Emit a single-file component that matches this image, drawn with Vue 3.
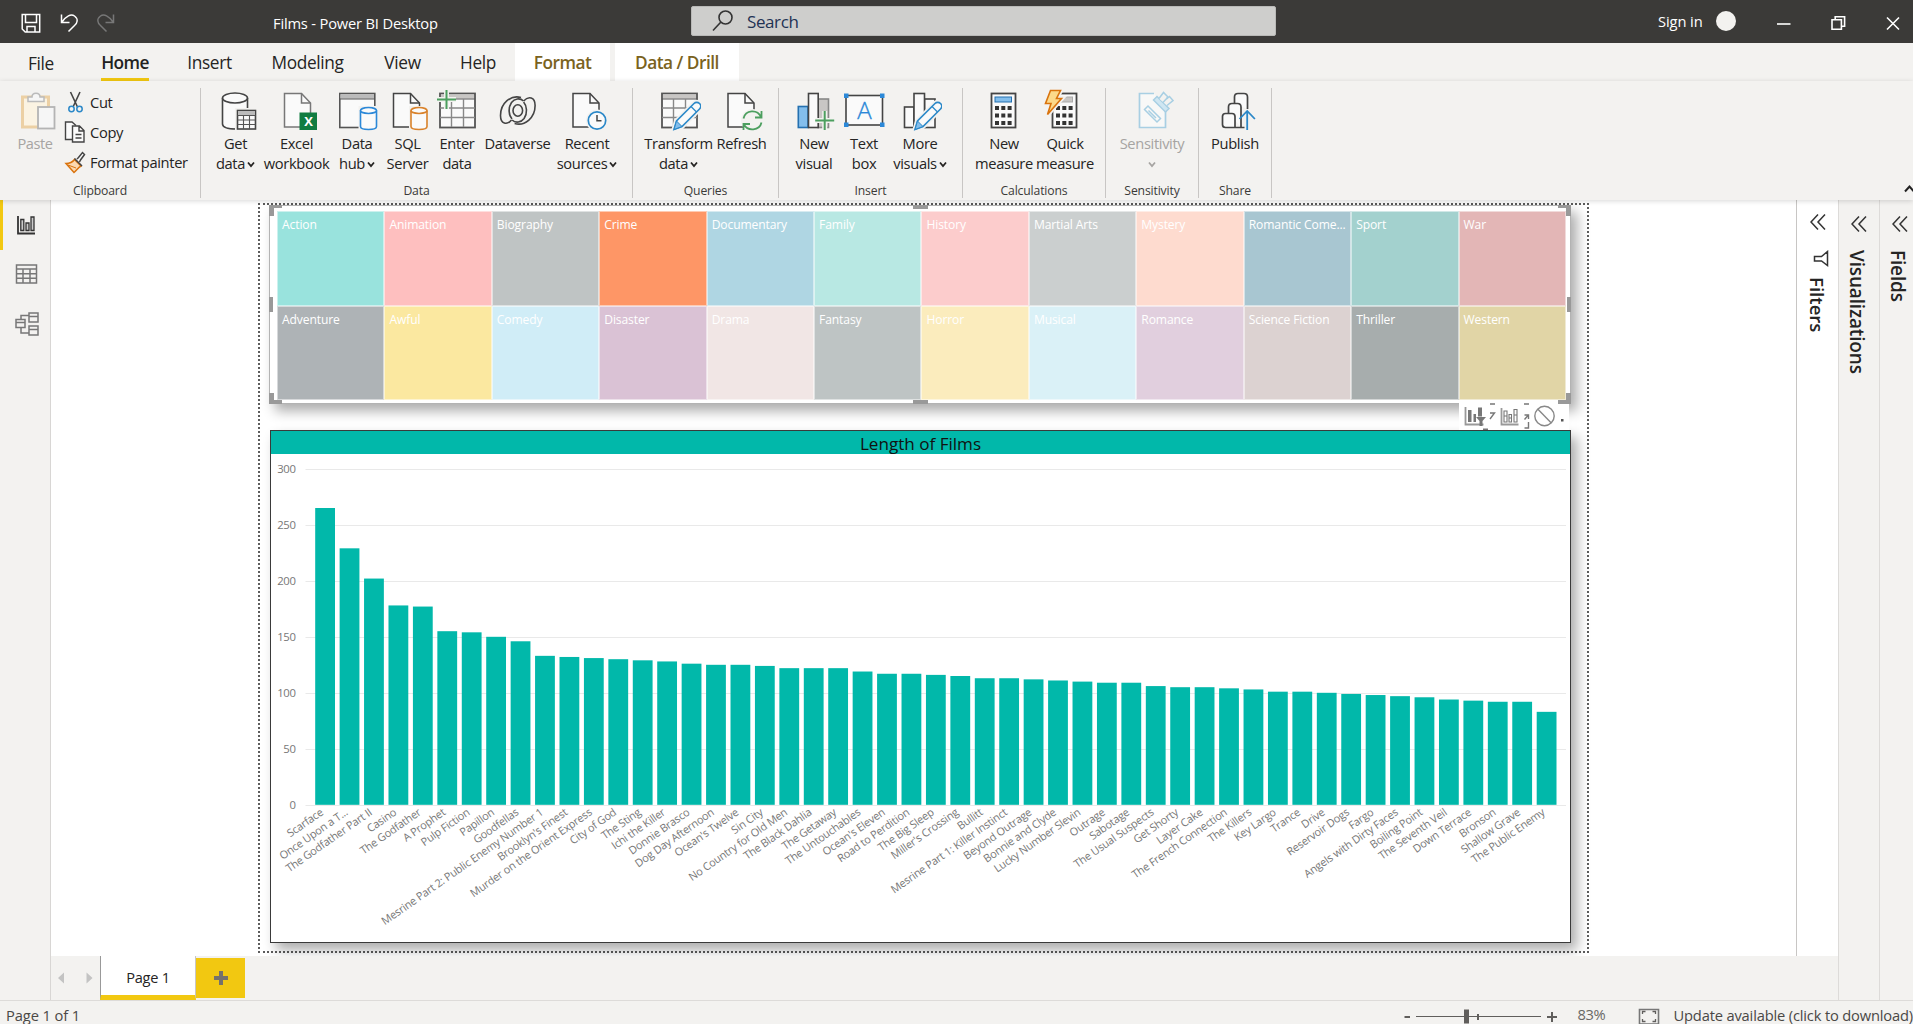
<script setup>
const tabs = [
  { name: 'File', width: 82, cls: 'file' },
  { name: 'Home', width: 86, cls: 'active' },
  { name: 'Insert', width: 83, cls: '' },
  { name: 'Modeling', width: 113, cls: '' },
  { name: 'View', width: 77, cls: '' },
  { name: 'Help', width: 74, cls: '' },
  { name: 'Format', width: 95, cls: 'ctx' },
  { name: 'Data / Drill', width: 124, cls: 'ctx second' },
]

const doc = (x, c = '#444') =>
  `<path d="M${x} 4.5h17l9 9.500v24h-26z" fill="#fafafa" stroke="${c}" stroke-width="1.500"/><path d="M${x + 17} 4.500v9.500h9" fill="none" stroke="${c}" stroke-width="1.500"/>`
const drum = (x, y, h, c) =>
  `<path d="M${x} ${y}v${h}c0 4 16 4 16 0v-${h}" fill="#fafafa" stroke="${c}" stroke-width="1.600"/><ellipse cx="${x + 8}" cy="${y}" rx="8" ry="3" fill="#fafafa" stroke="${c}" stroke-width="1.600"/>`
const grid = `<rect x="5" y="4.500" width="35" height="34" fill="#fafafa" stroke="#555" stroke-width="1.800"/><rect x="6" y="5.500" width="33" height="4" fill="#c8c6c4"/><path d="M5 10h35" stroke="#555"/><path d="M5 19h35M5 28.500h35M16.500 10v28M28.500 10v28" stroke="#888" stroke-width="1.400"/>`
const pencil = `<path d="M17 40.500l2.500-8.500 17.500-17.500a3.800 3.800 0 0 1 5.500 5.500l-17.500 17.500z" fill="#fafafa" stroke="#f3f2f0" stroke-width="5"/><path d="M17 40.500l2.500-8.500 17.500-17.500a3.800 3.800 0 0 1 5.500 5.500l-17.500 17.500z" fill="#fafafa" stroke="#2b88c8" stroke-width="1.600"/><path d="M17 40.500l2.500-8.500 5.500 5.500z" fill="#83beec" stroke="#2b88c8"/><path d="M34 17.500l5.500 5.500" stroke="#2b88c8" stroke-width="1.300"/>`
const plus = (x, y) =>
  `<path d="M${x} ${y - 9.5}v19M${x - 9.5} ${y}h19" stroke="#f3f2f0" stroke-width="5"/><path d="M${x} ${y - 9.5}v19M${x - 9.5} ${y}h19" stroke="#4c9f5f" stroke-width="2"/>`
const keys = [17, 24.5, 32].map(y => [13, 19.3, 25.6].map(x => `<rect x="${x}" y="${y}" width="4" height="4" fill="#333"/>`).join('')).join('')
const calc = (fill, stroke) =>
  `<rect x="9.500" y="4.500" width="24" height="34" fill="#fafafa" stroke="#444" stroke-width="1.800"/><rect x="13" y="8" width="16.500" height="5" fill="${fill}" stroke="${stroke}"/>${keys}`

const icons = {
  get: `<path d="M8.500 9v26c0 3 5 5 14 5h11v-31" fill="#fafafa"/><path d="M8.500 9v26c0 3 5 5 14 5M33.500 9v12" fill="none" stroke="#444" stroke-width="1.600"/><ellipse cx="21" cy="9" rx="12.500" ry="5" fill="#fafafa" stroke="#444" stroke-width="1.600"/><rect x="21" y="19" width="22" height="22" fill="#f3f2f0"/><rect x="23.500" y="21.500" width="18" height="18.500" fill="#fafafa" stroke="#444" stroke-width="1.600"/><rect x="24" y="22" width="17" height="4" fill="#bbb"/><path d="M23.500 26.500h18M23.500 31h18M23.500 35.500h18M29.500 26v14M35.500 26v14" stroke="#555" stroke-width="1.100"/>`,
  excel: doc(9.5, '#777') + `<rect x="24.500" y="23.500" width="17.500" height="17.500" fill="#107c41"/><text x="33.300" y="37" text-anchor="middle" font-size="13" font-weight="700" fill="#fff" font-family="Open Sans, sans-serif">X</text>`,
  hub: `<rect x="4.800" y="4.500" width="35" height="34" fill="#fafafa" stroke="#555" stroke-width="1.600"/><rect x="5.500" y="5.200" width="33.500" height="4.500" fill="#bbb"/><path d="M5 10h35" stroke="#555"/><rect x="23.500" y="17" width="20" height="24" fill="#f3f2f0"/>` + drum(25.5, 21.5, 16, '#2b88d8'),
  sql: doc(7.5) + `<rect x="23" y="17" width="20" height="24" fill="#f3f2f0"/>` + drum(25, 21.5, 16, '#d9822b'),
  enter: grid + plus(11.5, 10.5),
  dataverse: `<g fill="none" stroke="#444" stroke-width="1.600"><ellipse cx="21.800" cy="21.500" rx="4.800" ry="5.800"/><path d="M27.500 12C24 8.500 18.500 9.500 15.500 13.500c-3.500 5-3 12.500.500 16.500"/><path d="M16.100 31c3.500 3.500 9 2.500 12-1.500 3.500-5 3-12.500-.5-16.500"/><path d="M25 8.500C15 5.500 4.500 14 4.500 26.500c0 8.500 6.500 10 11 4.500"/><path d="M18.600 34.500C28.600 37.500 39.100 29 39.100 16.500c0-8.500-6.500-10-11.500-4.500"/></g>`,
  recent: doc(8) + `<circle cx="32" cy="31.500" r="11" fill="#f3f2f0"/><circle cx="32" cy="31.500" r="8.700" fill="#fafafa" stroke="#2b88c8" stroke-width="1.700"/><path d="M32 26v5.800h4.500" fill="none" stroke="#444" stroke-width="1.500"/>`,
  transform: grid + pencil,
  refresh: doc(8) + `<circle cx="32.500" cy="31.500" r="11.500" fill="#f3f2f0"/><g fill="none" stroke="#4c9f5f" stroke-width="1.800"><path d="M23.500 29.500c2-9 14-9.500 17.500-1.500M41.500 22v6.500h-6.500M41.500 33.500c-2 8.500-14 9-17.500 2M23.500 41v-6h6.500"/></g>`,
  visual: `<g stroke-width="1.600"><rect x="6.300" y="17.500" width="9.700" height="21" fill="#83beec" stroke="#2470b0"/><rect x="26" y="10" width="10.500" height="28.500" fill="#c8c6c4" stroke="#888"/><rect x="16.500" y="4.500" width="9.700" height="34" fill="#fafafa" stroke="#444"/></g>` + plus(32.7, 31.5),
  textbox: `<rect x="4" y="6.500" width="36.500" height="29.500" fill="#fafafa" stroke="#444" stroke-width="1.600"/><g fill="#2b88d8"><rect x="2" y="4.500" width="4.500" height="4.500"/><rect x="38" y="4.500" width="4.500" height="4.500"/><rect x="2" y="33.500" width="4.500" height="4.500"/><rect x="38" y="33.500" width="4.500" height="4.500"/></g><text x="22.200" y="30" text-anchor="middle" font-size="24" fill="#2b88d8" font-family="Open Sans, sans-serif" font-weight="300" stroke="#2b88d8" stroke-width=".3">A</text>`,
  more: `<g stroke="#444" stroke-width="1.600" fill="#fafafa"><rect x="6.500" y="18" width="9.500" height="20.500"/><rect x="26.500" y="10" width="10.500" height="28.500"/><rect x="16" y="4.500" width="10.500" height="34"/></g>` + pencil,
  calc: calc('#83beec', '#2470b0'),
  quick: calc('#c8c6c4', '#aaa') + `<path d="M7.500 1.500h10l-4 8h5l-14 16 3.500-11h-5.500z" fill="#fcd98a" stroke="#f3f2f0" stroke-width="5"/><path d="M7.500 1.500h10l-4 8h5l-14 16 3.500-11h-5.500z" fill="#fcd98a" stroke="#d9730d" stroke-width="1.600"/>`,
  sensitivity: `<path d="M24 4.500h-14.500v34h26v-18" fill="#f8f8f7" stroke="#a8cfe3" stroke-width="1.700"/><g fill="none" stroke="#a8cfe3" stroke-width="1.500"><path d="M14.500 20.500l3.500-3.500 12.500 12.500-3.500 3.500z"/><path d="M18.500 21.500l7.500 7.500"/><path d="M23.500 11l3.500-3.500 12 12-3.500 3.500z" fill="#cfe6f2"/><path d="M29 9.500l4.500-6 4.500 4.500-1.500 2 3-2.500 3.500 4-6 5" fill="#f3f2f0"/><path d="M33 13.500l5-5.500"/></g>`,
  publish: `<g fill="#fafafa" stroke="#444" stroke-width="1.700"><path d="M21.500 14.500V8c0-2 1.500-3.500 3.500-3.500h6c2 0 3.500 1.500 3.500 3.500v12"/><path d="M15.500 24.500V18c0-2 1.500-3.500 3.500-3.500h5.500c2 0 3.500 1.500 3.500 3.500v20"/><path d="M34 38.500H12.500c-2 0-3-1-3-3v-8c0-2 1-3 3-3h6.500c2 0 3 1 3 3v11"/></g><path d="M34.500 20v21" stroke="#f3f2f0" stroke-width="6"/><path d="M34.200 41V22.500M26.500 30l7.700-8 7.700 8" fill="none" stroke="#2b88c8" stroke-width="1.800"/>`,
}

const groups = [
  { name: 'Data', width: 432, pad: 5, items: [
    { icon: 'get', a: 'Get', b: 'data', drop: true, w: 59 },
    { icon: 'excel', a: 'Excel', b: 'workbook', w: 63 },
    { icon: 'hub', a: 'Data', b: 'hub', drop: true, w: 58 },
    { icon: 'sql', a: 'SQL', b: 'Server', w: 43 },
    { icon: 'enter', a: 'Enter', b: 'data', w: 56 },
    { icon: 'dataverse', a: 'Dataverse', b: '', w: 65 },
    { icon: 'recent', a: 'Recent', b: 'sources', drop: true, w: 74 },
  ] },
  { name: 'Queries', width: 146, pad: 10, items: [
    { icon: 'transform', a: 'Transform', b: 'data', drop: true, w: 71 },
    { icon: 'refresh', a: 'Refresh', b: '', w: 55 },
  ] },
  { name: 'Insert', width: 184, pad: 10, items: [
    { icon: 'visual', a: 'New', b: 'visual', w: 50 },
    { icon: 'textbox', a: 'Text', b: 'box', w: 50 },
    { icon: 'more', a: 'More', b: 'visuals', drop: true, w: 62 },
  ] },
  { name: 'Calculations', width: 143, pad: 10, items: [
    { icon: 'calc', a: 'New', b: 'measure', w: 62 },
    { icon: 'quick', a: 'Quick', b: 'measure', w: 60 },
  ] },
  { name: 'Sensitivity', width: 93, pad: 11, items: [
    { icon: 'sensitivity', a: 'Sensitivity', b: '', drop: true, w: 70, off: true },
  ] },
  { name: 'Share', width: 73, pad: 6, items: [
    { icon: 'publish', a: 'Publish', b: '', w: 60 },
  ] },
]

const genres = [
  ['Action', '#99e3dd'], ['Adventure', '#aeb3b6'],
  ['Animation', '#febfbf'], ['Awful', '#fbe8a0'],
  ['Biography', '#bfc4c4'], ['Comedy', '#d0edf7'],
  ['Crime', '#fe9666'], ['Disaster', '#dac2d5'],
  ['Documentary', '#afd6e3'], ['Drama', '#f1e6e5'],
  ['Family', '#b8e8e3'], ['Fantasy', '#bec4c4'],
  ['History', '#fccccc'], ['Horror', '#fbecbd'],
  ['Martial Arts', '#cbcfcf'], ['Musical', '#daf1f7'],
  ['Mystery', '#fedbcf'], ['Romance', '#e1cfde'],
  ['Romantic Come...', '#a8c6d1'], ['Science Fiction', '#dcd2d1'],
  ['Sport', '#a3d1ce'], ['Thriller', '#a7adad'],
  ['War', '#e3b6b6'], ['Western', '#e1d5a6'],
]

const films = [
  ['Scarface', 265], ['Once Upon a T...', 229], ['The Godfather Part II', 202], ['Casino', 178],
  ['The Godfather', 177], ['A Prophet', 155], ['Pulp Fiction', 154], ['Papillon', 150],
  ['Goodfellas', 146], ['Mesrine Part 2: Public Enemy Number 1', 133], ["Brooklyn's Finest", 132],
  ['Murder on the Orient Express', 131], ['City of God', 130], ['The Sting', 129],
  ['Ichi the Killer', 128], ['Donnie Brasco', 126], ['Dog Day Afternoon', 125],
  ["Ocean's Twelve", 125], ['Sin City', 124], ['No Country for Old Men', 122],
  ['The Black Dahlia', 122], ['The Getaway', 122], ['The Untouchables', 119],
  ["Ocean's Eleven", 117], ['Road to Perdition', 117], ['The Big Sleep', 116],
  ["Miller's Crossing", 115], ['Bullitt', 113], ['Mesrine Part 1: Killer Instinct', 113],
  ['Beyond Outrage', 112], ['Bonnie and Clyde', 111], ['Lucky Number Slevin', 110],
  ['Outrage', 109], ['Sabotage', 109], ['The Usual Suspects', 106], ['Get Shorty', 105],
  ['Layer Cake', 105], ['The French Connection', 104], ['The Killers', 103], ['Key Largo', 101],
  ['Trance', 101], ['Drive', 100], ['Reservoir Dogs', 99], ['Fargo', 98],
  ['Angels with Dirty Faces', 97], ['Boiling Point', 96], ['The Seventh Veil', 94],
  ['Down Terrace', 93], ['Bronson', 92], ['Shallow Grave', 92], ['The Public Enemy', 83],
]
const base = 350.8
const bars = films.map(([name, v], i) => ({
  name,
  x: 44.2 + i * 24.43,
  y: base - v * 1.12,
  h: v * 1.12,
}))
const ticks = [300, 250, 200, 150, 100, 50, 0].map(v => ({ v, y: Math.round(base - v * 1.12) + 0.5 }))
</script>

<template>
  <div class="app">
    <header class="titlebar">
      <svg class="quick" width="110" height="43" fill="none" stroke="#fff" stroke-width="1.500">
        <path d="M6.200 14.500h17.500v17.500h-14.500l-3-3z M9.500 15v7.500h11v-7.500 M11 32v-5.500h8v5.500" />
        <path d="M45.500 14.500v8h8M46 22c4-6 9-8.500 12.500-6 4 3 3 7 0 9.500l-6 6" />
        <path d="M97.500 14.500v8h-8M97 22c-4-6-9-8.500-12.500-6-4 3-3 7 0 9.500l6 6" stroke="#777" />
      </svg>
      <div class="doc-name">Films - Power BI Desktop</div>
      <div class="search">
        <svg width="22" height="22" fill="none" stroke="#333" stroke-width="1.600"><circle cx="13.500" cy="7.500" r="6.500" /><path d="M8.700 12.300L1 20.500" /></svg>
        <span>Search</span>
      </div>
      <div class="account">Sign in<i></i></div>
      <svg class="win" width="130" height="43" fill="none" stroke="#fff" stroke-width="1.600">
        <path d="M1 24h13.500" />
        <path d="M56 19.800h9.400v9.400h-9.400zM59.200 19.500v-2.700h9.400v9.400h-3" />
        <path d="M111 17.500l12 12M123 17.500l-12 12" />
      </svg>
    </header>

    <nav class="tabs">
      <div v-for="t in tabs" :key="t.name" class="tab" :class="t.cls" :style="{ width: t.width + 'px' }"><span>{{ t.name }}</span></div>
    </nav>

    <section class="ribbon">
      <div class="group clipboard">
        <div class="group-body">
          <div class="paste">
            <svg width="44" height="42">
              <rect x="9.500" y="8" width="26" height="30" fill="#fbf3e2" stroke="#ecd0a4" stroke-width="3" />
              <path d="M15 12.500V8h4c0-5 8-5 8 0h4v4.500z" fill="#f6f6f6" stroke="#bbb" stroke-width="1.500" />
              <rect x="25" y="18" width="16.500" height="21.500" fill="#f6f6f6" stroke="#b4b4b4" stroke-width="1.800" />
            </svg>
            <span>Paste</span>
          </div>
          <div class="clip-list">
            <div>
              <svg width="22" height="24" fill="none"><path d="M6.500 2l7 15M16 2L9 17" stroke="#444" stroke-width="1.600" /><circle cx="7.500" cy="19" r="2.700" stroke="#2b88c8" stroke-width="1.500" /><circle cx="15.500" cy="19" r="2.700" stroke="#2b88c8" stroke-width="1.500" /></svg>Cut
            </div>
            <div>
              <svg width="22" height="24" fill="#fafafa" stroke="#444" stroke-width="1.400"><path d="M8 19.500H1.500V2H8l4 3.500" /><path d="M8.500 6h7l4.500 4.500v11.500H8.500zM15 6v5h5M11.500 14.500h6M11.500 18h6" /></svg>Copy
            </div>
            <div>
              <svg width="22" height="24"><path d="M2 13.500c4 0 7-2 8.500-4l6.500 6.500c-3 1.500-4 4-7 6.500z" fill="#fcd9b0" stroke="#d9730d" stroke-width="1.500" /><path d="M4 15l8 3" stroke="#d9730d" /><path d="M10.500 8.500l7.500 7.500M13 9l1.500-1.500 4-5 2 2-4 5.500L15.500 12" stroke="#444" fill="#fafafa" stroke-width="1.500" /></svg>Format painter
            </div>
          </div>
        </div>
        <div class="group-name">Clipboard</div>
      </div>
      <div v-for="g in groups" :key="g.name" class="group" :style="{ width: g.width + 'px' }">
        <div class="group-body" :style="{ paddingLeft: g.pad + 'px' }">
          <div v-for="(it, i) in g.items" :key="i" class="cmd" :class="{ off: it.off }" :style="{ width: it.w + 'px' }">
            <svg width="44" height="42" v-html="icons[it.icon]"></svg>
            <span>{{ it.a }}</span>
            <span>{{ it.b }}<svg v-if="it.drop" class="caret" :class="{ alone: !it.b }" width="8" height="7"><path d="M1 1.500l3 3.500 3-3.500" fill="none" stroke="currentColor" stroke-width="1.800" /></svg></span>
          </div>
        </div>
        <div class="group-name">{{ g.name }}</div>
      </div>
      <svg class="collapse" width="10" height="9"><path d="M1 7.500l4.500-5 4.500 5" fill="none" stroke="#222" stroke-width="2" /></svg>
    </section>

    <div class="work">
      <aside class="rail">
        <div class="rail-item on"><svg width="24" height="26" fill="#ccc" stroke="#333" stroke-width="1.300"><path d="M4 4v17.500h17" fill="none" stroke-width="1.800" /><path d="M6.800 7.500h3v11h-3zM12 11h3v7.500h-3zM17 5h3v13.500h-3z" /></svg></div>
        <div class="rail-item"><svg width="24" height="26" fill="none" stroke="#777" stroke-width="1.500"><path d="M2.500 4h20v18h-20zM2.500 8h20M2.500 12.700h20M2.500 17.300h20M9 8v14M16 8v14" /></svg></div>
        <div class="rail-item"><svg width="26" height="28" fill="#f3f2f0" stroke="#777" stroke-width="1.500"><path d="M7 10V5.500h8M7 17v6h8" fill="none" /><path d="M2 9.500h9v8H2zM2 12.500h9M15 3h9v9h-9zM15 6.500h9M15 16h9v9h-9zM15 19.500h9" /></svg></div>
      </aside>

      <div class="center">
        <div class="canvas-row">
          <main class="canvas">
            <div class="page">
              <div class="treemap">
                <div class="tiles">
                  <div v-for="g in genres" :key="g[0]" class="tile" :style="{ background: g[1] }">{{ g[0] }}</div>
                </div>
                <i class="h tl"></i><i class="h tr"></i><i class="h bl"></i><i class="h br"></i>
                <i class="m t"></i><i class="m b"></i><i class="m l"></i><i class="m r"></i>
                <svg class="interact" width="110" height="27" fill="none" stroke="#777" stroke-width="1.400">
                  <path d="M6.500 4v17.500h18" stroke="#999" stroke-width="1.800" /><path d="M9 7h3.500v12H9zM14.500 11h2.500v8h-2.500zM19 4.500h4v9h-4z" fill="#777" stroke="none" />
                  <path d="M17 14h10l-3.500 4v5h-3v-5z" fill="#777" stroke="none" /><path d="M31 1h5M31 10h4.500l-4.500 6M24 26.300h5" />
                  <path d="M42.500 5v16.500h17" stroke="#999" stroke-width="1.800" /><path d="M45 8h3v11h-3zM45 13h3M50 11.500h2.500v7.500H50zM50 15h2.500M55 6.500h3v12.500h-3zM55 12h3" stroke-width="1.100" />
                  <path d="M65 1h5M65.500 12h4v4M69 12.500l-3.500 4M69.500 19v6h-4" />
                  <circle cx="85.500" cy="13" r="9.700" stroke="#888" /><path d="M78.700 6l13.600 14" stroke="#888" /><rect x="102" y="16" width="2.500" height="2.500" fill="#555" stroke="none" />
                </svg>
              </div>

              <div class="chart">
                <div class="chart-title">Length of Films</div>
                <svg width="1299" height="487">
                  <g v-for="t in ticks" :key="t.v">
                    <path :d="`M34.500 ${t.y}H1295`" stroke="#e9e9e9" />
                    <text class="axis" x="24.500" :y="t.y + 3.5" text-anchor="end">{{ t.v }}</text>
                  </g>
                  <g v-for="b in bars" :key="b.name">
                    <rect :x="b.x" :y="b.y" width="19.800" :height="b.h" fill="#01b8aa" />
                    <text class="film" text-anchor="end" :transform="`translate(${b.x + 8.8} 360) rotate(-35)`">{{ b.name }}</text>
                  </g>
                </svg>
              </div>
            </div>
          </main>
          <aside class="filters">
            <svg width="16" height="16" class="chev"><path d="M8 .5L1 8l7 7.500M15 .5L8 8l7 7.500" fill="none" stroke="#333" stroke-width="1.500" /></svg>
            <svg width="16" height="18" class="funnel"><path d="M14.500 1.500v14L8.500 11H1.500V6.500h7z" fill="none" stroke="#333" stroke-width="1.500" /></svg>
            <span>Filters</span>
          </aside>
        </div>
        <footer class="pages">
          <svg width="49" height="44" fill="#c3c3c3"><path d="M13 16.500v11l-6-5.500zM35.500 16.500v11l6-5.500z" /></svg>
          <div class="page-tab">Page 1</div>
          <div class="add"><svg width="16" height="16"><path d="M8 1v14M1 8h14" stroke="#75716c" stroke-width="4" /></svg></div>
        </footer>
      </div>

      <aside class="pane">
        <svg width="16" height="16" class="chev"><path d="M8 .5L1 8l7 7.500M15 .5L8 8l7 7.500" fill="none" stroke="#333" stroke-width="1.500" /></svg>
        <span>Visualizations</span>
      </aside>
      <aside class="pane last">
        <svg width="16" height="16" class="chev"><path d="M8 .5L1 8l7 7.500M15 .5L8 8l7 7.500" fill="none" stroke="#333" stroke-width="1.500" /></svg>
        <span>Fields</span>
      </aside>
    </div>

    <div class="status">
      <span class="count">Page 1 of 1</span>
      <svg width="160" height="24" fill="none" stroke="#605e5c">
        <path d="M4.500 17h5.500" stroke-width="2" /><path d="M16 16.500h125" stroke-width="1.200" /><path d="M66.500 9.500v14" stroke-width="5" /><path d="M78 14v6" stroke-width="2" /><path d="M147 17h10M152 12v10" stroke-width="2" />
      </svg>
      <span class="pct">83%</span>
      <svg class="fit" width="22" height="24" fill="none" stroke="#605e5c"><path d="M1.500 9.500h19v14.500h-19z" stroke-width="1.600" stroke="#777" /><path d="M4.500 14v-2.500h3M14.500 11.500h3v2.500M4.500 19v2.500h3M14.500 21.500h3V19" stroke-width="1.300" /></svg>
      <span class="update">Update available (click to download)</span>
    </div>
  </div>
</template>

<style>
body { margin: 0; overflow: hidden; }
</style>

<style scoped>
.app { width: 1913px; height: 1024px; display: flex; flex-direction: column; background: #f3f2f0; font-family: "Open Sans", "Noto Sans", sans-serif; color: #252423; overflow: hidden; }
.app * { box-sizing: border-box; }
svg { display: block; flex: none; }
.titlebar { height: 43px; flex: none; background: #3b3a38; color: #fff; display: flex; align-items: center; font-size: 14.7px; }
.quick { margin-left: 16px; }
.doc-name { margin-left: 147px; width: 418px; letter-spacing: -.18px; padding-top: 2px; white-space: nowrap; }
.search { width: 585px; height: 30px; background: #cececc; border: 1px solid #b9b9b7; border-radius: 2px; display: flex; align-items: center; color: #1f3354; font-size: 17px; letter-spacing: -.4px; margin-bottom: 1px; }
.search svg { margin-left: 20px; }
.search span { margin-left: 13px; }
.account { margin-left: 382px; display: flex; align-items: center; font-size: 14.7px; letter-spacing: -.1px; width: 118px; white-space: nowrap; padding-bottom: 1px; }
.account i { width: 20px; height: 20px; border-radius: 50%; background: #f3f2f0; margin-left: 13px; }

.tabs { height: 38px; flex: none; display: flex; font-size: 17.3px; letter-spacing: -.35px; }
.tab { display: flex; align-items: center; justify-content: center; padding-top: 1px; }
.tab.file { padding-top: 2px; }
.tab.active { padding-top: 2px; }
.tab.active span { font-weight: 600; letter-spacing: -.6px; height: 36px; line-height: 36px; border-bottom: 3px solid #f2c811; color: #222; }
.tab.ctx { background: #fff; color: #7a6220; font-weight: 600; letter-spacing: -.5px; }
.tab.second { margin-left: 5px; }

.ribbon { height: 119px; flex: none; display: flex; padding-top: 7px; position: relative; z-index: 3; background: #f3f2f0; box-shadow: 0 1px 5px rgba(0,0,0,.16); }
.group { height: 110px; border-right: 1px solid #c8c6c4; flex: none; display: flex; flex-direction: column; }
.group-body { height: 92px; flex: none; display: flex; }
.group-name { text-align: center; font-size: 12.2px; letter-spacing: -.15px; line-height: 18px; margin-top: 2px; color: #3b3a38; height: 18px; flex: none; }
.clipboard { width: 201px; }
.paste { width: 44px; margin-left: 13px; font-size: 14.6px; letter-spacing: -.4px; color: #a6a4a2; text-align: center; display: flex; flex-direction: column; align-items: center; }
.paste span, .cmd span { line-height: 20px; white-space: nowrap; }
.paste svg { margin-top: 1px; }
.paste span { margin-top: 2px; }
.clip-list { margin: -1px 0 0 7px; font-size: 14.7px; letter-spacing: -.35px; }
.clip-list div { height: 30px; display: flex; align-items: center; gap: 4px; white-space: nowrap; }
.cmd { display: flex; flex-direction: column; align-items: center; font-size: 14.7px; letter-spacing: -.35px; padding-top: 1px; flex: none; }
.cmd span { display: flex; align-items: center; height: 20px; margin-top: 2px; }
.cmd span + span { margin-top: 0; }
.cmd.off { color: #a6a4a2; }
.caret { margin: 2px 0 0 2px; }
.caret.alone { margin-left: 0; }
.collapse { position: absolute; right: -1px; bottom: 7px; }

.work { flex: 1; display: flex; min-height: 0; }
.rail { width: 51px; flex: none; border-right: 1px solid #d8d6d4; }
.rail-item { height: 50px; display: flex; align-items: center; padding: 0 0 2px 14px; }
.rail-item.on { border-left: 3px solid #f2c811; padding: 0 0 0 11px; }
.center { width: 1787px; flex: none; display: flex; flex-direction: column; }
.canvas-row { height: 756px; display: flex; background: #fff; }
.canvas { width: 1745px; padding: 3px 0 0 207px; overflow: hidden; }
.page { width: 1331px; height: 750px; border: 2px dotted #5c5c5c; padding-left: 9px; }
.treemap { width: 1302px; height: 199px; border: 1px solid #b3b3b3; background: #fff; position: relative; z-index: 1; box-shadow: 6px 7px 12px rgba(0,0,0,.33); padding: 5px 0 0 7px; }
.tiles { width: 1289px; height: 189px; display: grid; grid-template: repeat(2, 1fr) / repeat(12, 1fr); grid-auto-flow: column; }
.tile { border: 1px solid rgba(255,255,255,.5); color: #fff; font-size: 12.1px; letter-spacing: -.12px; line-height: 17px; padding: 4px 0 0 4px; white-space: nowrap; overflow: hidden; }
.h, .m { position: absolute; }
.h { width: 13px; height: 11px; border: 0 solid #999; }
.tl { left: -1px; top: -1px; border-width: 3px 0 0 5px; }
.tr { right: -1px; top: -1px; border-width: 3px 5px 0 0; }
.bl { left: -1px; bottom: -1px; border-width: 0 0 4px 5px; }
.br { right: -1px; bottom: -1px; border-width: 0 5px 4px 0; }
.m { background: #999; }
.m.t, .m.b { width: 15px; height: 4px; left: 643px; }
.m.t { top: -1px; }
.m.b { bottom: -1px; }
.m.l, .m.r { width: 4px; height: 15px; top: 91px; }
.m.l { left: -1px; }
.m.r { right: -1px; }
.interact { position: absolute; right: 1px; top: 197px; background: #fff; z-index: -1; }
.chart { width: 1301px; height: 513px; margin: 26px 0 0 1px; border: 1px solid #3a3a3a; background: #fff; box-shadow: 6px 7px 12px rgba(0,0,0,.33); }
.chart-title { height: 23px; line-height: 25px; background: #01b8aa; color: #111; text-align: center; font-size: 17.1px; overflow: hidden; }
.axis { font-size: 11.3px; fill: #777; letter-spacing: -.35px; }
.film { font-size: 10.9px; fill: #777; letter-spacing: -.2px; }
.filters { width: 42px; border-left: 1px solid #c8c6c4; }
.filters, .pane { display: flex; flex-direction: column; align-items: center; font-size: 19px; flex: none; }
.filters span, .pane span { writing-mode: vertical-rl; font-weight: 600; letter-spacing: -.15px; line-height: 22px; margin-right: 4px; }
.filters .chev { margin-top: 14px; }
.funnel { margin: 20px 0 0 6px; }
.filters .funnel + span { margin-top: 9px; font-weight: 600; font-size: 18.6px; letter-spacing: 0; margin-right: 2px; }
.pane { width: 41px; border-left: 1px solid #dddbd9; }
.pane.last { width: 34px; padding-left: 6px; }
.pane .chev { margin-top: 16px; }
.pane span { margin-top: 18px; }

.pages { height: 44px; display: flex; }
.page-tab { width: 96px; height: 44px; background: #fff; border-left: 1px solid #999; border-right: 1px solid #c8c6c4; border-bottom: 5px solid #f2c811; text-align: center; font-size: 14.6px; font-weight: 500; line-height: 42px; letter-spacing: -.25px; }
.add { width: 49px; height: 40px; margin-top: 2px; background: #f2c811; display: flex; align-items: center; justify-content: center; }
.status { height: 24px; flex: none; border-top: 1px solid #dddbd9; display: flex; font-size: 14.7px; color: #4a4846; white-space: nowrap; line-height: 28px; }
.status svg { margin-top: -1px; }
.count { width: 1401px; padding-left: 6px; letter-spacing: -.1px; }
.pct { margin-left: 18px; width: 60px; color: #6a6866; letter-spacing: -.4px; line-height: 27px; }
.update { margin-left: 14px; letter-spacing: -.17px; }
</style>
